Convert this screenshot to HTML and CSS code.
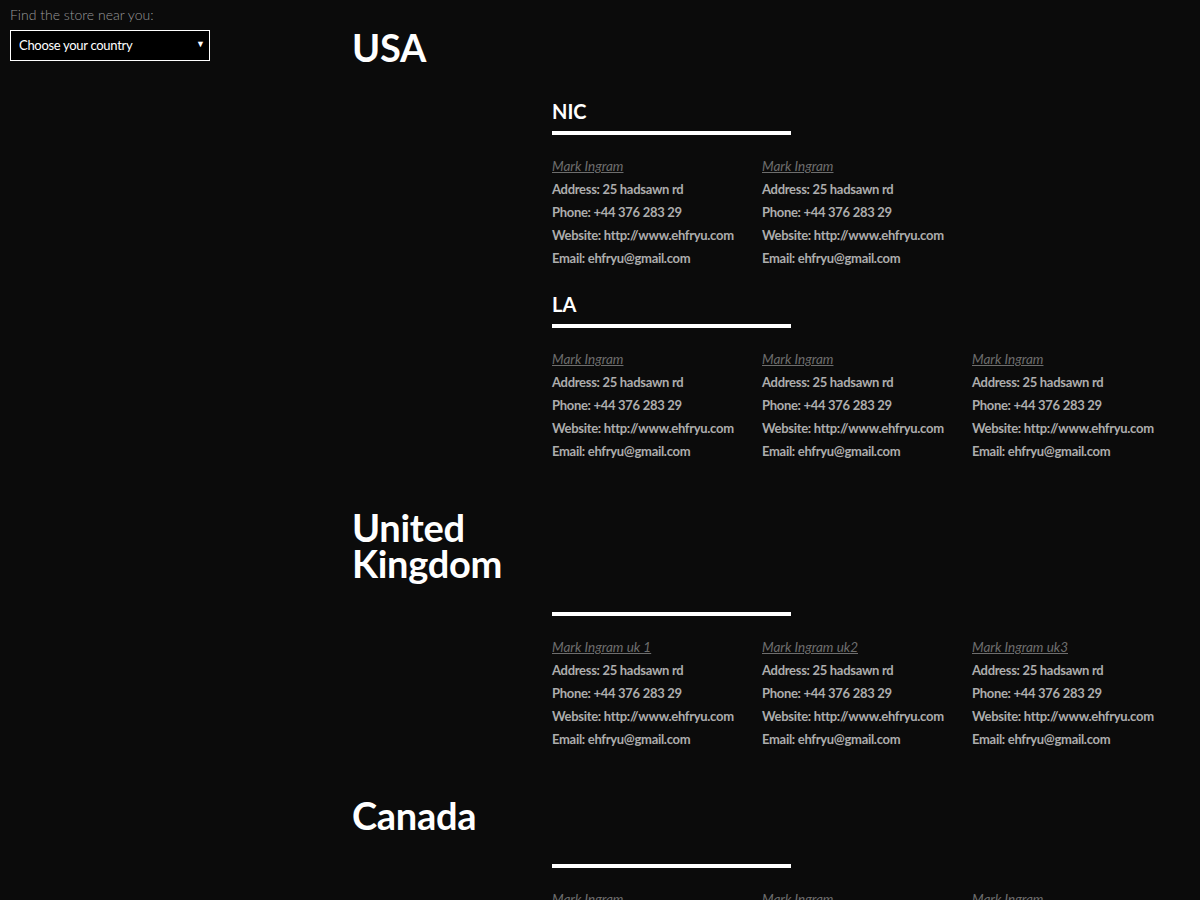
FILE: index.html
```html
<!DOCTYPE html>
<html lang="en">
<head>
<meta charset="utf-8">
<title>Store locator</title>
<link rel="stylesheet" href="styles.css">
</head>
<body>
<div class="page">
  <aside class="sidebar">
    <label class="find-label" for="country">Find the store near you:</label>
    <div class="select-wrap">
      <select id="country" class="country-select">
        <option>Choose your country</option>
        <option>USA</option>
        <option>United Kingdom</option>
        <option>Canada</option>
      </select>
    </div>
  </aside>
  <main class="content">
    <section class="country">
      <h1 class="country-name">USA</h1>
      <div class="cities">
        <div class="city">
          <h2 class="city-name">NIC</h2>
          <div class="bar"></div>
          <div class="stores">
            <div class="store">
              <a class="store-name" href="#">Mark Ingram</a>
              <p>Address: 25 hadsawn rd</p>
              <p>Phone: +44 376 283 29</p>
              <p>Website: http://www.ehfryu.com</p>
              <p>Email: ehfryu@gmail.com</p>
            </div>
            <div class="store">
              <a class="store-name" href="#">Mark Ingram</a>
              <p>Address: 25 hadsawn rd</p>
              <p>Phone: +44 376 283 29</p>
              <p>Website: http://www.ehfryu.com</p>
              <p>Email: ehfryu@gmail.com</p>
            </div>
          </div>
        </div>
        <div class="city">
          <h2 class="city-name">LA</h2>
          <div class="bar"></div>
          <div class="stores">
            <div class="store">
              <a class="store-name" href="#">Mark Ingram</a>
              <p>Address: 25 hadsawn rd</p>
              <p>Phone: +44 376 283 29</p>
              <p>Website: http://www.ehfryu.com</p>
              <p>Email: ehfryu@gmail.com</p>
            </div>
            <div class="store">
              <a class="store-name" href="#">Mark Ingram</a>
              <p>Address: 25 hadsawn rd</p>
              <p>Phone: +44 376 283 29</p>
              <p>Website: http://www.ehfryu.com</p>
              <p>Email: ehfryu@gmail.com</p>
            </div>
            <div class="store">
              <a class="store-name" href="#">Mark Ingram</a>
              <p>Address: 25 hadsawn rd</p>
              <p>Phone: +44 376 283 29</p>
              <p>Website: http://www.ehfryu.com</p>
              <p>Email: ehfryu@gmail.com</p>
            </div>
          </div>
        </div>
      </div>
    </section>

    <section class="country">
      <h1 class="country-name">United<br>Kingdom</h1>
      <div class="cities">
        <div class="city">
          <h2 class="city-name"></h2>
          <div class="bar"></div>
          <div class="stores">
            <div class="store">
              <a class="store-name" href="#">Mark Ingram uk 1</a>
              <p>Address: 25 hadsawn rd</p>
              <p>Phone: +44 376 283 29</p>
              <p>Website: http://www.ehfryu.com</p>
              <p>Email: ehfryu@gmail.com</p>
            </div>
            <div class="store">
              <a class="store-name" href="#">Mark Ingram uk2</a>
              <p>Address: 25 hadsawn rd</p>
              <p>Phone: +44 376 283 29</p>
              <p>Website: http://www.ehfryu.com</p>
              <p>Email: ehfryu@gmail.com</p>
            </div>
            <div class="store">
              <a class="store-name" href="#">Mark Ingram uk3</a>
              <p>Address: 25 hadsawn rd</p>
              <p>Phone: +44 376 283 29</p>
              <p>Website: http://www.ehfryu.com</p>
              <p>Email: ehfryu@gmail.com</p>
            </div>
          </div>
        </div>
      </div>
    </section>

    <section class="country">
      <h1 class="country-name">Canada</h1>
      <div class="cities">
        <div class="city">
          <h2 class="city-name"></h2>
          <div class="bar"></div>
          <div class="stores">
            <div class="store">
              <a class="store-name" href="#">Mark Ingram</a>
              <p>Address: 25 hadsawn rd</p>
              <p>Phone: +44 376 283 29</p>
              <p>Website: http://www.ehfryu.com</p>
              <p>Email: ehfryu@gmail.com</p>
            </div>
            <div class="store">
              <a class="store-name" href="#">Mark Ingram</a>
              <p>Address: 25 hadsawn rd</p>
              <p>Phone: +44 376 283 29</p>
              <p>Website: http://www.ehfryu.com</p>
              <p>Email: ehfryu@gmail.com</p>
            </div>
            <div class="store">
              <a class="store-name" href="#">Mark Ingram</a>
              <p>Address: 25 hadsawn rd</p>
              <p>Phone: +44 376 283 29</p>
              <p>Website: http://www.ehfryu.com</p>
              <p>Email: ehfryu@gmail.com</p>
            </div>
          </div>
        </div>
      </div>
    </section>
  </main>
</div>
</body>
</html>
```

FILE: styles.css
```css
html, body {
  margin: 0;
  padding: 0;
  background: #0b0b0b;
}

body {
  font-family: Lato, "Noto Sans", sans-serif;
  color: #ffffff;
}

.page {
  display: flex;
  align-items: flex-start;
}

.sidebar {
  width: 342px;
  flex: none;
  padding: 5px 0 0 10px;
  display: flex;
  flex-direction: column;
}

.find-label {
  font-size: 14px;
  line-height: 20px;
  font-weight: 300;
  color: #9a9a9a;
  margin-bottom: 5px;
}

.select-wrap {
  position: relative;
  width: 200px;
}

.select-wrap::after {
  content: "\25BC";
  position: absolute;
  right: 5px;
  top: 9px;
  font-size: 9px;
  line-height: 10px;
  color: #ffffff;
  pointer-events: none;
}

.country-select {
  appearance: none;
  -webkit-appearance: none;
  display: block;
  width: 200px;
  height: 31px;
  margin: 0;
  padding: 0 20px 0 8px;
  background: #000000;
  color: #ffffff;
  border: 1px solid #ffffff;
  border-radius: 0;
  font-family: Lato, "Noto Sans", sans-serif;
  font-size: 13px;
  letter-spacing: -0.3px;
  line-height: 29px;
}

.content {
  flex: 1;
  padding-top: 29px;
}

.country + .country {
  margin-top: 46px;
}

.country-name {
  margin: 0;
  font-size: 38px;
  line-height: 36px;
  font-weight: 700;
  color: #ffffff;
  letter-spacing: -0.3px;
}

.cities {
  margin: 29px 0 0 200px;
  display: flex;
  flex-direction: column;
  gap: 17px;
}

.city-name {
  margin: 0 0 2px;
  font-size: 20px;
  line-height: 35px;
  font-weight: 700;
  color: #ffffff;
}

.bar {
  width: 239px;
  height: 4px;
  background: #ffffff;
}

.stores {
  margin-top: 20px;
  display: grid;
  grid-template-columns: repeat(3, 210px);
}

.store {
  display: flex;
  flex-direction: column;
}

.store-name {
  font-size: 13.5px;
  line-height: 23px;
  font-style: italic;
  font-weight: 400;
  color: #6e6e6e;
  text-decoration: underline;
  align-self: flex-start;
}

.store p {
  margin: 0;
  font-size: 13px;
  line-height: 23px;
  font-weight: 700;
  color: #adadad;
  letter-spacing: -0.3px;
  white-space: nowrap;
}
```
